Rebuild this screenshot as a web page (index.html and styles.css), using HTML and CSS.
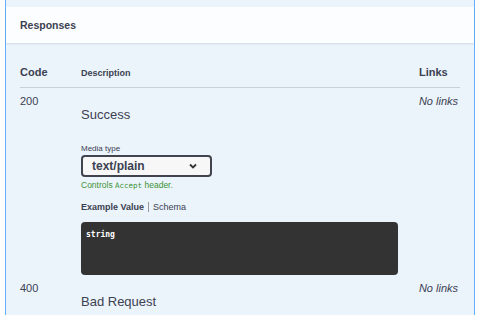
FILE: index.html
```html
<!DOCTYPE html>
<html lang="en">
<head>
    <meta charset="UTF-8">
    <title>Responses</title>
    <link rel="stylesheet" href="styles.css">
</head>
<body>
    <div class="opblock">
        <div class="section-header">
            <h4>Responses</h4>
        </div>
        <div class="responses">
            <div class="row head">
                <div class="col-code">Code</div>
                <div class="col-desc">Description</div>
                <div class="col-links">Links</div>
            </div>
            <div class="row response">
                <div class="col-code">200</div>
                <div class="col-desc">
                    <div class="desc-text">Success</div>
                    <div class="media-label">Media type</div>
                    <div class="select-box">
                        <span>text/plain</span>
                        <svg class="chev" width="10" height="7" viewBox="0 0 10 7"><path d="M2 1.5 L5 4.5 L8 1.5" fill="none" stroke="#333" stroke-width="1.8"/></svg>
                    </div>
                    <div class="controls">Controls <code>Accept</code> header.</div>
                    <div class="tabs">
                        <span class="tab active">Example Value</span>
                        <span class="tab">Schema</span>
                    </div>
                    <div class="example"><code>string</code></div>
                </div>
                <div class="col-links"><i>No links</i></div>
            </div>
            <div class="row response">
                <div class="col-code">400</div>
                <div class="col-desc">
                    <div class="desc-text">Bad Request</div>
                </div>
                <div class="col-links"><i>No links</i></div>
            </div>
        </div>
    </div>
</body>
</html>
```

FILE: styles.css
```css
body {
    margin: 0;
    background: #fff;
    font-family: "Liberation Sans", Arial, sans-serif;
    color: #3b4151;
}
.opblock {
    margin: 0 5px;
    padding-top: 7px;
    height: 320px;
    background: #ebf3fb;
    border-left: 1px solid #61affe;
    border-right: 1px solid #61affe;
}
.section-header {
    height: 36px;
    display: flex;
    align-items: center;
    padding: 0 14px;
    background: rgba(255, 255, 255, 0.8);
    box-shadow: 0 1px 2px rgba(0, 0, 0, 0.1);
}
.section-header h4 {
    margin: 0;
    font-size: 10.5px;
    font-weight: bold;
}
.responses {
    padding: 0 14px;
}
.row {
    display: flex;
}
.head {
    margin-top: 21px;
    height: 21px;
    padding-top: 2px;
    align-items: flex-start;
    border-bottom: 1px solid rgba(59, 65, 81, 0.2);
    font-weight: bold;
}
.col-code {
    width: 61px;
}
.col-desc {
    flex: 1;
}
.col-links {
    width: 60px;
    padding-right: 2px;
    text-align: right;
}
.head .col-code,
.head .col-links {
    font-size: 11px;
}
.head .col-desc {
    font-size: 9px;
    padding-top: 2px;
}
.head .col-links {
    text-align: left;
    padding-left: 21px;
    width: 41px;
    padding-right: 0;
}
.response {
    padding-top: 7px;
    font-size: 11px;
}
.response .col-links {
    font-size: 11px;
}
.desc-text {
    font-size: 13px;
    margin-top: 12px;
}
.media-label {
    font-size: 8px;
    margin-top: 22px;
}
.select-box {
    margin-top: 2px;
    height: 18px;
    border: 2px solid #41444e;
    border-radius: 4px;
    background: #f7f7f7;
    display: flex;
    align-items: center;
    justify-content: space-between;
    padding: 0 12px 0 9px;
    font-size: 12px;
    font-weight: bold;
    box-sizing: content-box;
    width: 106px;
}
.controls {
    margin-top: 3px;
    font-size: 8.5px;
    color: #3c9433;
}
.controls code {
    font-family: "DejaVu Sans Mono", monospace;
    font-size: 7.5px;
}
.tabs {
    margin-top: 12px;
    font-size: 9px;
    display: flex;
}
.tab {
    padding: 0 4px;
}
.tab.active {
    font-weight: bold;
    padding-left: 0;
    border-right: 1px solid #999;
}
.example {
    margin-top: 10px;
    width: 307px;
    height: 43px;
    padding: 5px;
    background: #333;
    border-radius: 4px;
}
.example code {
    color: #fff;
    font-family: "DejaVu Sans Mono", monospace;
    font-weight: bold;
    font-size: 8px;
}
```
